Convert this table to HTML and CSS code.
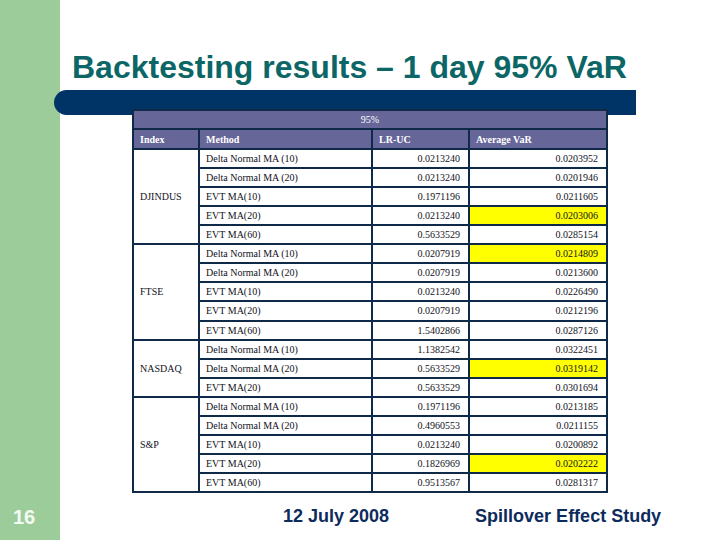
FILE: index.html
```html
<!DOCTYPE html>
<html>
<head>
<meta charset="utf-8">
<link rel="stylesheet" href="styles.css">
</head>
<body>
<div class="slide">
  <aside class="side"><span class="num">16</span></aside>
  <main class="main">
    <h1 class="title">Backtesting results – 1 day 95% VaR</h1>
    <div class="bar"></div>
    <table class="res">
      <colgroup><col class="c1"><col class="c2"><col class="c3"><col class="c4"></colgroup>
      <tr class="h1"><th colspan="4">95%</th></tr>
      <tr class="h2"><th>Index</th><th>Method</th><th>LR-UC</th><th>Average VaR</th></tr>
      <tr><td rowspan="5" class="idx">DJINDUS</td><td>Delta Normal MA (10)</td><td class="n">0.0213240</td><td class="n">0.0203952</td></tr>
      <tr><td>Delta Normal MA (20)</td><td class="n">0.0213240</td><td class="n">0.0201946</td></tr>
      <tr><td>EVT MA(10)</td><td class="n">0.1971196</td><td class="n">0.0211605</td></tr>
      <tr><td>EVT MA(20)</td><td class="n">0.0213240</td><td class="n hl">0.0203006</td></tr>
      <tr><td>EVT MA(60)</td><td class="n">0.5633529</td><td class="n">0.0285154</td></tr>
      <tr><td rowspan="5" class="idx">FTSE</td><td>Delta Normal MA (10)</td><td class="n">0.0207919</td><td class="n hl">0.0214809</td></tr>
      <tr><td>Delta Normal MA (20)</td><td class="n">0.0207919</td><td class="n">0.0213600</td></tr>
      <tr><td>EVT MA(10)</td><td class="n">0.0213240</td><td class="n">0.0226490</td></tr>
      <tr><td>EVT MA(20)</td><td class="n">0.0207919</td><td class="n">0.0212196</td></tr>
      <tr><td>EVT MA(60)</td><td class="n">1.5402866</td><td class="n">0.0287126</td></tr>
      <tr><td rowspan="3" class="idx">NASDAQ</td><td>Delta Normal MA (10)</td><td class="n">1.1382542</td><td class="n">0.0322451</td></tr>
      <tr><td>Delta Normal MA (20)</td><td class="n">0.5633529</td><td class="n hl">0.0319142</td></tr>
      <tr><td>EVT MA(20)</td><td class="n">0.5633529</td><td class="n">0.0301694</td></tr>
      <tr><td rowspan="5" class="idx">S&amp;P</td><td>Delta Normal MA (10)</td><td class="n">0.1971196</td><td class="n">0.0213185</td></tr>
      <tr><td>Delta Normal MA (20)</td><td class="n">0.4960553</td><td class="n">0.0211155</td></tr>
      <tr><td>EVT MA(10)</td><td class="n">0.0213240</td><td class="n">0.0200892</td></tr>
      <tr><td>EVT MA(20)</td><td class="n">0.1826969</td><td class="n hl">0.0202222</td></tr>
      <tr><td>EVT MA(60)</td><td class="n">0.9513567</td><td class="n">0.0281317</td></tr>
    </table>
    <footer class="foot">
      <span class="date">12 July 2008</span>
      <span class="study">Spillover Effect Study</span>
    </footer>
  </main>
</div>
</body>
</html>
```
FILE: styles.css
```css
html, body {
  margin: 0;
  padding: 0;
  background: #ffffff;
}
.slide {
  display: flex;
  width: 720px;
  height: 540px;
  overflow: hidden;
}
.side {
  width: 60px;
  flex: none;
  background: #9ccc9a;
  display: flex;
  flex-direction: column;
  justify-content: flex-end;
  padding-bottom: 11px;
  box-sizing: border-box;
}
.num {
  font-family: "Liberation Sans", Arial, sans-serif;
  font-weight: bold;
  font-size: 20px;
  color: #f4faf2;
  padding-left: 13px;
  line-height: 23px;
}
.main {
  flex: 1;
  display: flex;
  flex-direction: column;
  position: relative;
}
.title {
  margin: 49px 0 0 12px;
  font-family: "Liberation Sans", Arial, sans-serif;
  font-weight: bold;
  font-size: 32px;
  line-height: 37px;
  color: #0c6666;
  white-space: nowrap;
}
.bar {
  margin: 4px 0 0 -6px;
  width: 582px;
  height: 25px;
  background: #003366;
  border-radius: 13px 0 0 13px;
}
.res {
  position: relative;
  margin: -6px 0 0 72px;
  width: 474px;
  height: 384px;
  border-collapse: collapse;
  table-layout: fixed;
  font-family: "Liberation Serif", "Times New Roman", serif;
  font-size: 10px;
  color: #111122;
  background: #ffffff;
  border: 2px solid #0f2a48;
}
.c1 { width: 66px; }
.c2 { width: 173px; }
.c3 { width: 97px; }
.c4 { width: 138px; }
.res th, .res td {
  border: 2px solid #0f2a48;
  padding: 0 6px;
  height: 17px;
  white-space: nowrap;
}
.res th {
  background: #666699;
  color: #ffffff;
  font-weight: bold;
  text-align: left;
}
.h1 th {
  text-align: center;
  font-weight: normal;
}
.h2 th {
  height: 18px;
}
.res td.n {
  text-align: right;
  padding-right: 8px;
}
.res td.hl {
  background: #ffff00;
}
.idx {
  vertical-align: middle;
}
.foot {
  display: flex;
  margin: 13px 0 0 0;
  font-family: "Liberation Sans", Arial, sans-serif;
  font-weight: bold;
  font-size: 18px;
  color: #0d2b5c;
  line-height: 21px;
}
.date {
  margin-left: 223px;
}
.study {
  margin-left: 86px;
}
```
